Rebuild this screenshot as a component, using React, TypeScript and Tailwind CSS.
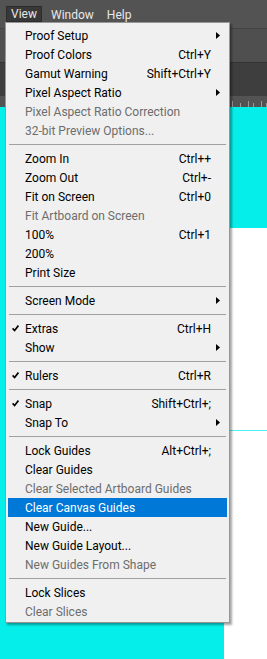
type Item =
  | { sep: true }
  | {
      sep?: false;
      label: string;
      shortcut?: string;
      sub?: boolean;
      disabled?: boolean;
      checked?: boolean;
      active?: boolean;
    };

const items: Item[] = [
  { label: "Proof Setup", sub: true },
  { label: "Proof Colors", shortcut: "Ctrl+Y" },
  { label: "Gamut Warning", shortcut: "Shift+Ctrl+Y" },
  { label: "Pixel Aspect Ratio", sub: true },
  { label: "Pixel Aspect Ratio Correction", disabled: true },
  { label: "32-bit Preview Options...", disabled: true },
  { sep: true },
  { label: "Zoom In", shortcut: "Ctrl++" },
  { label: "Zoom Out", shortcut: "Ctrl+-" },
  { label: "Fit on Screen", shortcut: "Ctrl+0" },
  { label: "Fit Artboard on Screen", disabled: true },
  { label: "100%", shortcut: "Ctrl+1" },
  { label: "200%" },
  { label: "Print Size" },
  { sep: true },
  { label: "Screen Mode", sub: true },
  { sep: true },
  { label: "Extras", shortcut: "Ctrl+H", checked: true },
  { label: "Show", sub: true },
  { sep: true },
  { label: "Rulers", shortcut: "Ctrl+R", checked: true },
  { sep: true },
  { label: "Snap", shortcut: "Shift+Ctrl+;", checked: true },
  { label: "Snap To", sub: true },
  { sep: true },
  { label: "Lock Guides", shortcut: "Alt+Ctrl+;" },
  { label: "Clear Guides" },
  { label: "Clear Selected Artboard Guides", disabled: true },
  { label: "Clear Canvas Guides", active: true },
  { label: "New Guide..." },
  { label: "New Guide Layout..." },
  { label: "New Guides From Shape", disabled: true },
  { sep: true },
  { label: "Lock Slices" },
  { label: "Clear Slices", disabled: true },
];

function Check() {
  return (
    <svg width="7" height="7" viewBox="0 0 7 7" aria-hidden>
      <polyline points="0.6,3.4 2.6,5.6 6.4,0.6" fill="none" stroke="#000" strokeWidth="1.6" />
    </svg>
  );
}

function Arrow() {
  return (
    <svg width="4" height="7" viewBox="0 0 4 7" aria-hidden>
      <polygon points="0,0 4,3.5 0,7" fill="#000" />
    </svg>
  );
}

function Ruler() {
  const ticks = [0, 8, 16, 21, 29, 34];
  return (
    <svg width="37" height="11" viewBox="0 0 37 11" className="absolute right-0 top-0" aria-hidden>
      {ticks.map((x, i) => (
        <line key={i} x1={x + 2.5} y1={i % 2 ? 7 : 5} x2={x + 2.5} y2={11} stroke="#9a9a9a" strokeWidth="1" />
      ))}
    </svg>
  );
}

function MenuRow({ item }: { item: Exclude<Item, { sep: true }> }) {
  const color = item.active ? "text-white" : item.disabled ? "text-[#6d6d6d]" : "text-black";
  return (
    <div
      className={`mx-[2px] flex h-[19px] items-center ${item.active ? "bg-[#0078d7]" : ""} ${color}`}
    >
      <div className="flex w-[17px] shrink-0 items-center pl-[4px]">{item.checked && <Check />}</div>
      <span className="flex-1 whitespace-nowrap">{item.label}</span>
      {item.shortcut && <span className="whitespace-nowrap">{item.shortcut}</span>}
      <div className="flex w-[16px] shrink-0 items-center pl-[5px]">{item.sub && <Arrow />}</div>
    </div>
  );
}

export default function App() {
  return (
    <div
      className="relative h-[659px] w-[267px] overflow-hidden bg-white text-[12px] leading-none"
      style={{ fontFamily: 'Roboto, "Noto Sans", sans-serif' }}
    >
      {/* workspace behind the menu */}
      <div className="flex h-full flex-col">
        <div className="flex h-[28px] items-start bg-[#535353] pl-[6px] pt-[6px] text-[#e8e8e8]">
          <div className="flex h-[16px] w-[36px] items-center justify-center border border-[#2c2c2c] bg-[#383838]">
            View
          </div>
          <span className="ml-[9px] mt-[3px]">Window</span>
          <span className="ml-[13px] mt-[3px]">Help</span>
        </div>
        <div className="h-[34px] border-t border-[#444] bg-[#4f4f4f]" />
        <div className="h-[34px] border-t border-[#333] bg-[#3e3e3e]" />
        <div className="relative h-[11px] bg-[#535353]">
          <Ruler />
        </div>
        <div className="h-[121px] bg-[#05eee9]" />
        <div className="flex flex-1">
          <div className="w-[224px] bg-[#05eee9]" />
          <div className="flex-1 bg-white pt-[202px]">
            <div className="h-px bg-[#4ff1f1]" />
          </div>
        </div>
      </div>

      {/* View dropdown */}
      <div className="absolute left-[5px] top-[22px] w-[225px] border border-[#979797] bg-[#f0f0f0] pb-[1px] pt-[3px] shadow-[2px_2px_2px_rgba(0,0,0,0.35)]">
        {items.map((item, i) =>
          item.sep ? (
            <div key={i} className="flex h-[9px] items-center px-[3px]">
              <div className="h-px w-full bg-[#a0a0a0]" />
            </div>
          ) : (
            <MenuRow key={i} item={item} />
          ),
        )}
      </div>
    </div>
  );
}
